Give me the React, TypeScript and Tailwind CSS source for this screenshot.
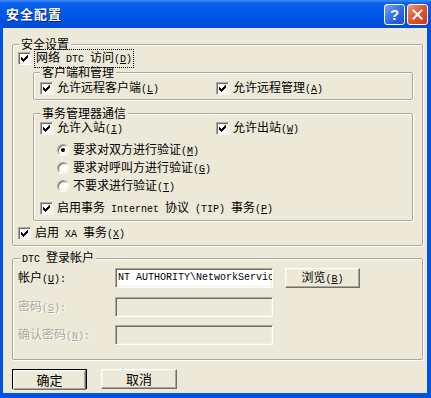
import React from 'react';

const MONO = "font-['Liberation_Mono',monospace] text-[10px]";

// SimSun-like mix: CJK runs at 12px, ASCII runs half width
const Label: React.FC<{ text: string; k?: string; suffix?: string; disabled?: boolean }> = ({
  text,
  k,
  suffix,
  disabled,
}) => {
  const parts = text.split(/([\x00-\x7f]+)/).filter(Boolean);
  return (
    <span
      className={`whitespace-pre ${disabled ? 'text-[#aca899] [text-shadow:1px_1px_0_#fff]' : 'text-black'}`}
    >
      {parts.map((p, i) =>
        /^[\x00-\x7f]+$/.test(p) ? (
          <span key={i} className={MONO}>
            {p}
          </span>
        ) : (
          <span key={i}>{p}</span>
        )
      )}
      {k && (
        <span className={MONO}>
          (<span className="underline underline-offset-1">{k}</span>){suffix}
        </span>
      )}
    </span>
  );
};

const Check: React.FC = () => (
  <span className="inline-flex w-[13px] h-[13px] shrink-0 items-center justify-center bg-white border border-t-[#aca899] border-l-[#aca899] border-r-white border-b-white shadow-[inset_1px_1px_0_#716f64,inset_-1px_-1px_0_#f1efe2]">
    <svg width="7" height="7" viewBox="0 0 7 7" shapeRendering="crispEdges">
      <path
        d="M6 0h1v1h-1z M5 1h2v1h-2z M0 2h1v1h-1z M4 2h3v1h-3z M0 3h2v1h-2z M3 3h3v1h-3z M0 4h5v1h-5z M1 5h3v1h-3z M2 6h1v1h-1z"
        fill="#000"
      />
    </svg>
  </span>
);

const Radio: React.FC<{ on?: boolean }> = ({ on }) => (
  <span className="inline-flex w-[12px] h-[12px] shrink-0 items-center justify-center rounded-full bg-white border border-t-[#aca899] border-l-[#aca899] border-r-white border-b-white shadow-[inset_1px_1px_0_#716f64,inset_-1px_-1px_0_#f1efe2]">
    {on && <span className="w-[4px] h-[4px] rounded-full bg-black" />}
  </span>
);

const CheckRow: React.FC<{ text: string; k: string; className?: string; focus?: boolean }> = ({
  text,
  k,
  className = '',
  focus,
}) => (
  <div className={`flex items-center gap-[4px] ${className}`}>
    <Check />
    <span className={focus ? 'outline-1 outline-dotted outline-black px-[1px]' : ''}>
      <Label text={text} k={k} />
    </span>
  </div>
);

const RadioRow: React.FC<{ text: string; k: string; on?: boolean }> = ({ text, k, on }) => (
  <div className="flex items-center gap-[4px] h-[18px] ml-[23px]">
    <Radio on={on} />
    <Label text={text} k={k} />
  </div>
);

const Field: React.FC<{ value?: string; disabled?: boolean }> = ({ value, disabled }) => (
  <div
    className={`w-[158px] h-[20px] flex items-center pl-[2px] overflow-hidden whitespace-nowrap border border-t-[#aca899] border-l-[#aca899] border-r-white border-b-white shadow-[inset_1px_1px_0_#716f64,inset_-1px_-1px_0_#f1efe2] ${
      disabled ? 'bg-[#ece9d8]' : 'bg-white'
    }`}
  >
    {value && <span className={`${MONO} text-black`}>{value}</span>}
  </div>
);

const Button: React.FC<{ children: React.ReactNode; className?: string }> = ({ children, className = '' }) => (
  <div
    className={`h-[20px] flex items-center justify-center bg-[#ece9d8] border border-t-white border-l-white border-r-[#716f64] border-b-[#716f64] shadow-[inset_-1px_-1px_0_#aca899,inset_1px_1px_0_#f1efe2] ${className}`}
  >
    {children}
  </div>
);

const Legend: React.FC<{ text: string; className?: string }> = ({ text, className = '' }) => (
  <legend className={`px-[2px] bg-[#ece9d8] leading-[14px] ${className}`}>
    <Label text={text} />
  </legend>
);

const GROUP =
  'border border-[#aca899] rounded-[2px] shadow-[inset_1px_1px_0_#fff,1px_1px_0_#fff] p-0 m-0 min-w-0';

export default function App() {
  return (
    <div className="w-[431px] h-[398px] flex flex-col bg-[#0054e3] overflow-hidden font-['Noto_Sans_CJK_SC','Liberation_Sans',sans-serif] text-[12px] leading-[14px] select-none">
      {/* Title bar */}
      <div className="h-[28px] shrink-0 flex items-center pl-[6px] pr-[3px] bg-[linear-gradient(to_bottom,#3d8cf6_0%,#0a5fea_12%,#0056e6_55%,#004bd8_100%)]">
        <span className="text-white font-bold text-[13px] tracking-[1px] [text-shadow:1px_1px_0_#0a1e8c]">
          安全配置
        </span>
        <div className="ml-auto flex gap-[2px]">
          <div className="w-[21px] h-[21px] rounded-[3px] border border-white flex items-center justify-center bg-[linear-gradient(135deg,#7aa6ff_0%,#2d67ee_55%,#1e4fd0_100%)]">
            <span className="text-white font-bold text-[15px] leading-none font-['Liberation_Sans',sans-serif]">?</span>
          </div>
          <div className="w-[21px] h-[21px] rounded-[3px] border border-white flex items-center justify-center bg-[linear-gradient(135deg,#f0977a_0%,#e0532f_50%,#c53a14_100%)]">
            <svg width="11" height="11" viewBox="0 0 11 11">
              <path d="M1.5 1.5 L9.5 9.5 M9.5 1.5 L1.5 9.5" stroke="#fff" strokeWidth="2" strokeLinecap="square" />
            </svg>
          </div>
        </div>
      </div>

      {/* Client area */}
      <div className="flex-1 ml-[3px] mr-[4px] mb-[5px] bg-[#ece9d8] flex flex-col">
        <fieldset className={`${GROUP} ml-[9px] mt-[9px] w-[411px]`}>
          <Legend text="安全设置" className="ml-[6px]" />
          <CheckRow text="网络 DTC 访问" k="D" focus className="h-[14px] ml-[5px]" />

          <fieldset className={`${GROUP} ml-[20px] w-[380px]`}>
            <Legend text="客户端和管理" className="ml-[6px]" />
            <div className="flex mt-[2px] mb-[3px] ml-[6px] h-[15px] items-center">
              <CheckRow text="允许远程客户端" k="L" className="w-[176px]" />
              <CheckRow text="允许远程管理" k="A" />
            </div>
          </fieldset>

          <fieldset className={`${GROUP} ml-[20px] mt-[6px] w-[380px]`}>
            <Legend text="事务管理器通信" className="ml-[6px]" />
            <div className="flex mt-[1px] ml-[6px] h-[15px] items-center">
              <CheckRow text="允许入站" k="I" className="w-[176px]" />
              <CheckRow text="允许出站" k="W" />
            </div>
            <div className="mt-[5px] flex flex-col">
              <RadioRow text="要求对双方进行验证" k="M" on />
              <RadioRow text="要求对呼叫方进行验证" k="G" />
              <RadioRow text="不要求进行验证" k="T" />
            </div>
            <CheckRow text="启用事务 Internet 协议 (TIP) 事务" k="P" className="mt-[6px] mb-[4px] ml-[6px] h-[15px]" />
          </fieldset>

          <CheckRow text="启用 XA 事务" k="X" className="mt-[5px] mb-[4px] ml-[5px] h-[15px]" />
        </fieldset>

        <fieldset className={`${GROUP} ml-[9px] mt-[4px] w-[411px]`}>
          <Legend text="DTC 登录帐户" className="ml-[7px]" />
          <div className="flex flex-col pt-[1px] pb-[14px]">
            <div className="flex items-center h-[20px]">
              <span className="ml-[5px] w-[97px]">
                <Label text="帐户" k="U" suffix=":" />
              </span>
              <Field value="NT AUTHORITY\NetworkService" />
              <Button className="ml-[12px] w-[75px]">
                <Label text="浏览" k="B" />
              </Button>
            </div>
            <div className="flex items-center h-[20px] mt-[9px]">
              <span className="ml-[5px] w-[97px]">
                <Label text="密码" k="S" suffix=":" disabled />
              </span>
              <Field disabled />
            </div>
            <div className="flex items-center h-[20px] mt-[8px]">
              <span className="ml-[5px] w-[97px]">
                <Label text="确认密码" k="N" suffix=":" disabled />
              </span>
              <Field disabled />
            </div>
          </div>
        </fieldset>

        <div className="flex mt-[9px] ml-[9px] gap-[14px]">
          <div className="w-[75px] h-[20px] border border-black flex">
            <Button className="flex-1 h-[18px]">
              <span className="text-[13px]">确定</span>
            </Button>
          </div>
          <Button className="w-[76px]">
            <span className="text-[13px]">取消</span>
          </Button>
        </div>
      </div>
    </div>
  );
}
